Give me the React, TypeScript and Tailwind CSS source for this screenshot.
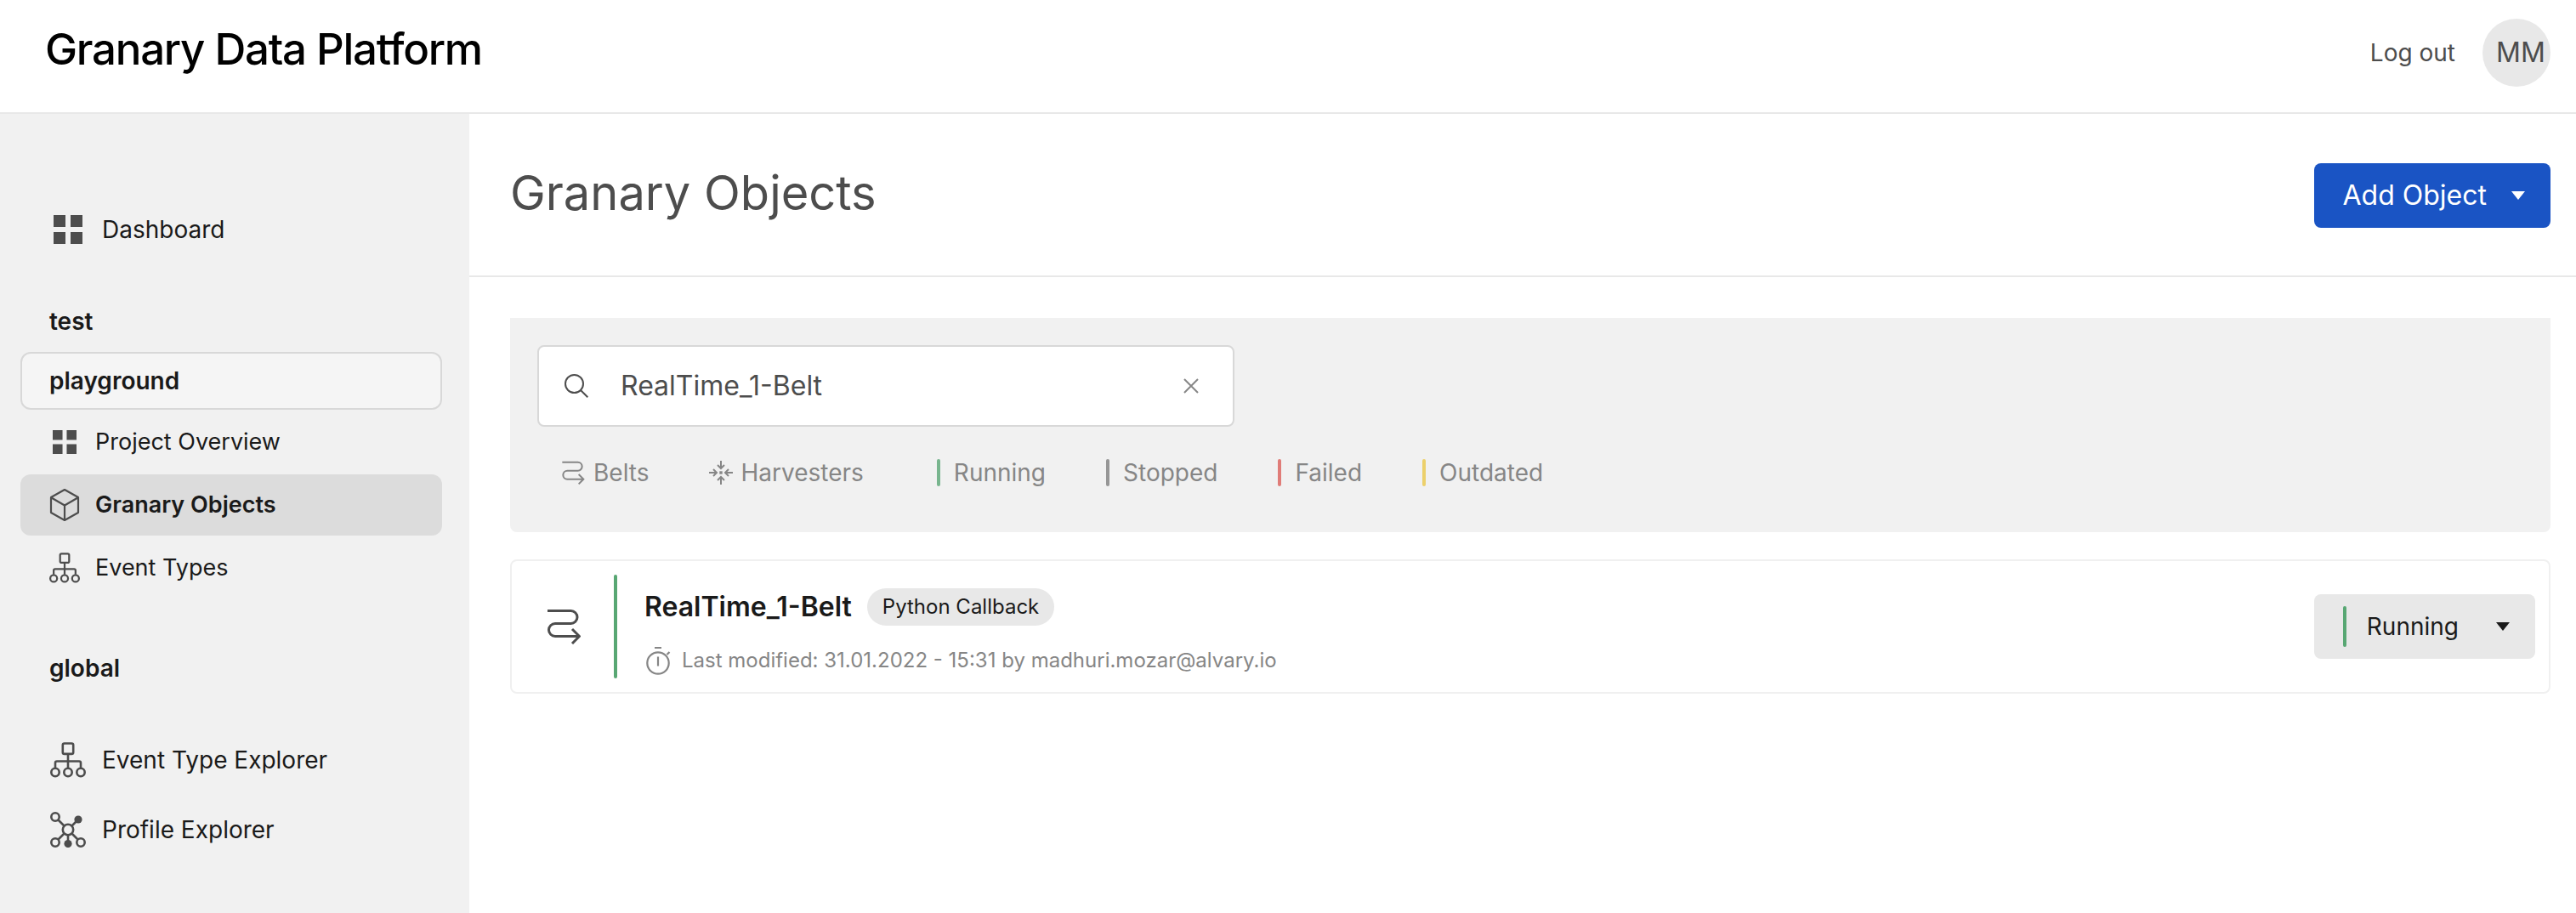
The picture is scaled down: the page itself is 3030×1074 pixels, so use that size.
import { useState } from "react";
import type { ReactNode } from "react";

function GridIcon({ className }: { className: string }) {
  return (
    <svg viewBox="0 0 34 34" className={className} fill="currentColor" aria-hidden="true">
      <path d="M0 0h14v14H0zM20 0h14v14H20zM0 20h14v14H0zM20 20h14v14H20z" />
    </svg>
  );
}

function CubeIcon() {
  return (
    <svg viewBox="0 0 36 40" className="h-10 w-9" fill="none" stroke="currentColor" strokeWidth="2.2" strokeLinejoin="round" strokeLinecap="round" aria-hidden="true">
      <path d="M18 2 34 11v18L18 38 2 29V11zM2.500 11.500 18 20.500 33.500 11.500M18 20.500V38" />
    </svg>
  );
}

function HierarchyIcon({ className }: { className: string }) {
  return (
    <svg viewBox="0 0 42 42" className={className} fill="none" stroke="currentColor" strokeWidth="2.6" aria-hidden="true">
      <rect x="14.800" y="1.500" width="12.400" height="12.400" rx="2" />
      <path d="M21 14v16M6 30v-5.500a2 2 0 0 1 2-2h26a2 2 0 0 1 2 2V30" />
      <circle cx="6" cy="35.500" r="4.700" />
      <circle cx="21" cy="35.500" r="4.700" />
      <circle cx="36" cy="35.500" r="4.700" />
    </svg>
  );
}

function ProfileIcon() {
  return (
    <svg viewBox="0 0 42 42" className="size-[42px]" fill="none" stroke="currentColor" strokeWidth="2.6" aria-hidden="true">
      <circle cx="6" cy="6" r="4.700" />
      <circle cx="6" cy="36" r="4.700" />
      <circle cx="36" cy="36" r="4.700" />
      <circle cx="21" cy="21" r="6.200" />
      <path d="M9.500 9.500l7 7M9.500 32.500l7-7M32.500 32.500l-7-7M25.500 16.500l6-6M21 27.500V36" />
      <circle cx="33" cy="9" r="4.600" fill="currentColor" stroke="none" />
      <circle cx="21" cy="37.500" r="4.600" fill="currentColor" stroke="none" />
    </svg>
  );
}

function BeltIcon({ className, strokeWidth }: { className: string; strokeWidth: number }) {
  return (
    <svg viewBox="0 0 40 42" className={className} fill="none" stroke="currentColor" strokeWidth={strokeWidth} aria-hidden="true">
      <path d="M1 2.500h27.500a7.500 7.500 0 0 1 0 15H10a7.500 7.500 0 0 0 0 15h28M30 24l8.500 8.500L30 41" />
    </svg>
  );
}

function HarvestIcon() {
  return (
    <svg viewBox="0 0 28 28" className="size-7" fill="none" stroke="currentColor" strokeWidth="2" aria-hidden="true">
      <path d="M14 0v9M10 5l4 4 4-4M14 28v-9M10 23l4-4 4 4M0 14h9M5 10l4 4-4 4M28 14h-9M23 10l-4 4 4 4" />
      <rect x="12.300" y="12.300" width="3.400" height="3.400" fill="currentColor" stroke="none" />
    </svg>
  );
}

function SearchIcon() {
  return (
    <svg viewBox="0 0 28 28" className="size-7 shrink-0" fill="none" stroke="currentColor" strokeWidth="2" aria-hidden="true">
      <circle cx="11.500" cy="11.500" r="10.500" />
      <path d="M19 19l8.300 8.300" />
    </svg>
  );
}

function StopwatchIcon() {
  return (
    <svg viewBox="-2 0 32 34" className="h-[34px] w-8" fill="none" stroke="currentColor" strokeWidth="2.2" aria-hidden="true">
      <circle cx="14" cy="20" r="12.700" />
      <path d="M10 2h8M14 12.500v11M24.500 10l3-3" />
    </svg>
  );
}

function Caret() {
  return (
    <svg viewBox="0 0 16 10" className="h-2.5 w-4" fill="currentColor" aria-hidden="true">
      <path d="M0 0h16L8 10z" />
    </svg>
  );
}

function SideLink({ icon, label, active }: { icon: ReactNode; label: string; active?: boolean }) {
  return (
    <a
      href="#"
      aria-current={active ? "page" : undefined}
      className={
        active
          ? "flex h-[72px] items-center gap-4 rounded-xl bg-[#dcdcdc] pl-8 text-[27px] font-semibold"
          : "flex h-[72px] items-center gap-4 rounded-xl pl-8 text-[27px]"
      }
    >
      <span className="flex w-10 justify-center text-[#4d4d4d]">{icon}</span>
      {label}
    </a>
  );
}

function TopLink({ icon, label }: { icon: ReactNode; label: string }) {
  return (
    <a href="#" className="flex h-[82px] items-center gap-[18px] pl-[34px]">
      <span className="flex w-[44px] justify-center text-[#4d4d4d]">{icon}</span>
      {label}
    </a>
  );
}

const statuses = [
  { label: "Running", bar: "h-8 w-1 rounded-full bg-[#78b58e]" },
  { label: "Stopped", bar: "h-8 w-1 rounded-full bg-[#969696]" },
  { label: "Failed", bar: "h-8 w-1 rounded-full bg-[#e07c78]" },
  { label: "Outdated", bar: "h-8 w-1 rounded-full bg-[#ecd06b]" },
];

export default function App() {
  const [query, setQuery] = useState("RealTime_1-Belt");

  return (
    <div className="flex min-h-screen flex-col bg-white font-['Inter',sans-serif] text-[28px] leading-9 text-[#1a1a1a]">
      <header className="flex h-[134px] items-start justify-between border-b-2 border-[#e8e8e8] pr-[30px] pl-[53px]">
        <div className="pt-[25px] text-[51px] leading-[66px] font-medium tracking-tight text-black">Granary Data Platform</div>
        <div className="flex items-center gap-8 pt-[22px] text-[#4d4d4d]">
          <a href="#">Log out</a>
          <div className="flex size-20 items-center rounded-full bg-[#e8e8e8] pl-4 text-[32px]">MM</div>
        </div>
      </header>

      <div className="flex grow">
        <nav className="w-[552px] shrink-0 bg-[#f1f1f1] pt-[95px] pr-8 pb-12 pl-6">
          <TopLink icon={<GridIcon className="size-[34px]" />} label="Dashboard" />
          <h2 className="mt-[49px] pl-[34px] font-semibold">test</h2>
          <h2 className="mt-[18px] flex h-[68px] items-center rounded-xl border-2 border-[#d8d8d8] bg-[#f5f5f5] pl-8 font-semibold">playground</h2>
          <div className="mt-0.5 flex flex-col gap-0.5">
            <SideLink icon={<GridIcon className="size-7" />} label="Project Overview" />
            <SideLink icon={<CubeIcon />} label="Granary Objects" active />
            <SideLink icon={<HierarchyIcon className="size-9" />} label="Event Types" />
          </div>
          <h2 className="mt-16 pl-[34px] font-semibold">global</h2>
          <div className="mt-[49px]">
            <TopLink icon={<HierarchyIcon className="size-[42px]" />} label="Event Type Explorer" />
            <TopLink icon={<ProfileIcon />} label="Profile Explorer" />
          </div>
        </nav>

        <main className="min-w-0 grow">
          <div className="flex h-48 items-start justify-between border-b-2 border-[#e8e8e8] pt-[58px] pr-[30px] pl-12">
            <h1 className="text-[56px] leading-[70px] text-[#4d4d4d]">Granary Objects</h1>
            <button type="button" className="flex h-[76px] items-center gap-[29px] rounded-lg bg-[#1a54c4] pr-[30px] pl-[34px] text-[32px] text-white">
              Add Object
              <Caret />
            </button>
          </div>

          <div className="flex flex-col gap-8 pt-12 pr-[30px] pl-12">
            <section className="rounded-b-lg bg-[#f1f1f1] px-8 pt-8 pb-[52px]">
              <div className="flex h-24 max-w-[820px] items-center rounded-lg border-2 border-[#d8d8d8] bg-white pr-10 pl-[30px] text-[#4d4d4d]">
                <SearchIcon />
                <input
                  type="text"
                  aria-label="Search objects"
                  value={query}
                  onChange={(e) => setQuery(e.target.value)}
                  className="ml-[38px] min-w-0 grow bg-transparent text-[32px] outline-none"
                />
                <button type="button" aria-label="Clear search" onClick={() => setQuery("")} className="text-[#868686]">
                  <svg viewBox="0 0 18 18" className="size-[18px]" fill="none" stroke="currentColor" strokeWidth="2" aria-hidden="true">
                    <path d="M1 1l16 16M17 1L1 17" />
                  </svg>
                </button>
              </div>
              <div className="mt-9 flex items-center pl-7 text-[#868686]">
                <button type="button" className="flex items-center gap-2.5">
                  <BeltIcon className="size-7" strokeWidth={3} />
                  Belts
                </button>
                <button type="button" className="ml-[70px] flex items-center gap-2.5">
                  <HarvestIcon />
                  Harvesters
                </button>
                <div className="ml-[86px] flex items-center gap-[71px]">
                  {statuses.map((s) => (
                    <button key={s.label} type="button" className="flex items-center gap-4">
                      <span className={s.bar} />
                      {s.label}
                    </button>
                  ))}
                </div>
              </div>
            </section>

            <article className="flex items-center rounded-lg border-2 border-[#f0f0f0] py-4 pr-4 pl-[41px]">
              <BeltIcon className="h-[42px] w-10 text-[#4d4d4d]" strokeWidth={3} />
              <div className="ml-[39px] h-[122px] w-1 rounded-full bg-[#58a773]" />
              <div className="ml-8 flex grow flex-col gap-6 self-stretch pt-4">
                <div className="flex items-center gap-[18px]">
                  <h2 className="text-[32px] leading-[44px] font-semibold">RealTime_1-Belt</h2>
                  <span className="flex h-11 items-center rounded-full bg-[#e8e8e8] px-[18px] text-[24px]">Python Callback</span>
                </div>
                <div className="flex items-center gap-3 text-[24px] leading-[34px] text-[#868686]">
                  <StopwatchIcon />
                  Last modified: 31.01.2022 - 15:31 by madhuri.mozar@alvary.io
                </div>
              </div>
              <button type="button" className="flex h-[76px] items-center rounded-lg bg-[#e8e8e8] pr-[30px] pl-[34px]">
                <span className="h-12 w-1 rounded-full bg-[#58a773]" />
                <span className="mr-11 ml-6">Running</span>
                <Caret />
              </button>
            </article>
          </div>
        </main>
      </div>
    </div>
  );
}
